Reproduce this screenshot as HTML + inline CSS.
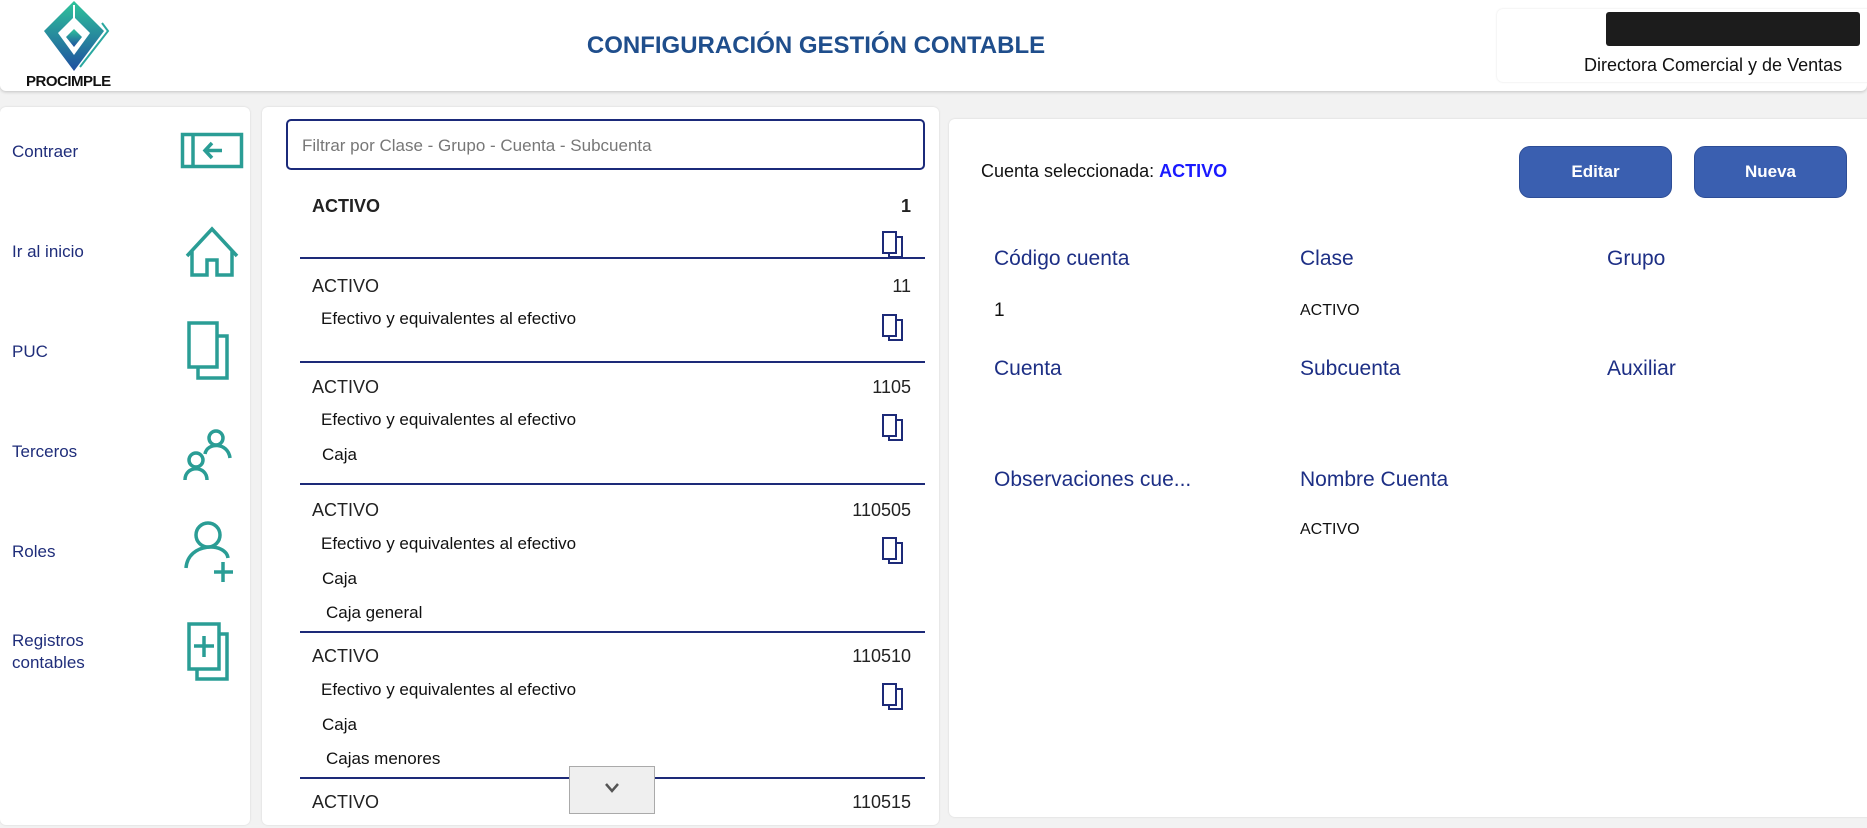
<!DOCTYPE html>
<html><head><meta charset="utf-8"><style>
*{margin:0;padding:0;box-sizing:border-box}
body{width:1867px;height:828px;background:#f2f2f2;font-family:"Liberation Sans",sans-serif;position:relative;overflow:hidden}
.a{position:absolute;white-space:nowrap}
.hdr{left:0;top:0;width:1867px;height:91px;background:#fff;box-shadow:0 1px 3px rgba(0,0,0,.2);border-radius:0 0 6px 6px}
.panel{background:#fff;border-radius:6px;box-shadow:0 0 2px rgba(0,0,0,.12)}
.nav{color:#1f2d7a;font-size:17px;left:12px}
.row{font-size:18px;color:#222}
.sub{font-size:17px;color:#111;left:321px}
.num{right:956px;font-size:18px;color:#222;text-align:right}
.sep{left:300px;width:625px;height:2px;background:#1d2a78}
.lbl{color:#1d2f85;font-size:21px}
.val{font-size:16px;color:#111}
.btn{background:#3a5fb0;color:#fff;font-weight:bold;font-size:17px;border-radius:11px;border:1px solid #2d4d96;display:flex;align-items:center;justify-content:center}
</style></head><body>
<div class="a hdr"></div>
<svg class="a" style="left:42px;top:1px" width="72" height="72" viewBox="0 0 72 72">
<defs><linearGradient id="g" x1="0" y1="0" x2="0" y2="1"><stop offset="0" stop-color="#2fc49a"/><stop offset="1" stop-color="#1f4fa0"/></linearGradient></defs>
<polygon points="32,0 62,30 32,70 2,30" fill="url(#g)"/>
<polygon points="32,16 48,32 32,54 16,32" fill="#fff"/>
<polygon points="32,28 40,36 32,46 24,36" fill="url(#g)"/>
<path d="M32 4 V22" stroke="#fff" stroke-width="2"/>
<path d="M60,22 L66,30 L38,66" fill="none" stroke="#2aa8a0" stroke-width="2"/>
</svg>
<div class="a" style="left:26px;top:73px;font-size:15px;font-weight:bold;color:#111;letter-spacing:-0.5px">PROCIMPLE</div>
<div class="a" style="left:0;width:1632px;top:32px;text-align:center;font-size:24px;font-weight:bold;color:#1f4e8c">CONFIGURACIÓN GESTIÓN CONTABLE</div>
<div class="a panel" style="left:1497px;top:9px;width:380px;height:73px"></div>
<div class="a" style="left:1606px;top:12px;width:254px;height:34px;background:#1c1c1c;border-radius:3px"></div>
<div class="a" style="left:1584px;top:55px;font-size:18px;color:#111">Directora Comercial y de Ventas</div>

<div class="a panel" style="left:0;top:107px;width:250px;height:718px"></div>
<div class="a nav" style="top:142px">Contraer</div>
<div class="a nav" style="top:242px">Ir al inicio</div>
<div class="a nav" style="top:342px">PUC</div>
<div class="a nav" style="top:442px">Terceros</div>
<div class="a nav" style="top:542px">Roles</div>
<div class="a nav" style="top:630px;line-height:22px">Registros<br>contables</div>
<svg class="a" style="left:180px;top:130px" width="66" height="560" viewBox="0 0 66 560" fill="none" stroke="#2a9d95" stroke-width="3.5">
<rect x="2.5" y="4.5" width="59" height="32"/><line x1="13" y1="4" x2="13" y2="37"/><path d="M25 20.5 H42 M32 13 L25 20.5 L32 28"/>
<path d="M7 126 L32 99 L57 126 M12 121 V145 H27 V130 H37 V145 H52 V121"/>
<rect x="9" y="193" width="28" height="44"/><path d="M37 206 H47 V248 H18 V237"/>
<circle cx="16" cy="330" r="7"/><path d="M5 350 C5 335 27 335 27 350"/><circle cx="36" cy="308" r="7"/><path d="M25 324 C27 312 48 312 50 328"/>
<circle cx="28" cy="405" r="12"/><path d="M6 438 C8 412 46 412 48 428 M43 432 V452 M34 442 H53"/>
<rect x="9" y="494" width="30" height="45"/><path d="M39 504 H47 V549 H17 V539 M24 506 V527 M14 516 H34"/>
</svg>

<div class="a panel" style="left:262px;top:107px;width:677px;height:718px"></div>
<div class="a" style="left:286px;top:119px;width:639px;height:51px;border:2px solid #1b2a7a;border-radius:5px"></div>
<div class="a" style="left:302px;top:136px;font-size:17px;color:#777">Filtrar por Clase - Grupo - Cuenta - Subcuenta</div>

<div class="a row" style="left:312px;top:196px;font-weight:bold">ACTIVO</div><div class="a num" style="top:196px;font-weight:bold">1</div>
<div class="a sep" style="top:257px"></div>
<div class="a row" style="left:312px;top:276px">ACTIVO</div><div class="a num" style="top:276px">11</div>
<div class="a sub" style="top:309px">Efectivo y equivalentes al efectivo</div>
<div class="a sep" style="top:361px"></div>
<div class="a row" style="left:312px;top:377px">ACTIVO</div><div class="a num" style="top:377px">1105</div>
<div class="a sub" style="top:410px">Efectivo y equivalentes al efectivo</div>
<div class="a sub" style="top:445px;left:322px">Caja</div>
<div class="a sep" style="top:483px"></div>
<div class="a row" style="left:312px;top:500px">ACTIVO</div><div class="a num" style="top:500px">110505</div>
<div class="a sub" style="top:534px">Efectivo y equivalentes al efectivo</div>
<div class="a sub" style="top:569px;left:322px">Caja</div>
<div class="a sub" style="top:603px;left:326px">Caja general</div>
<div class="a sep" style="top:631px"></div>
<div class="a row" style="left:312px;top:646px">ACTIVO</div><div class="a num" style="top:646px">110510</div>
<div class="a sub" style="top:680px">Efectivo y equivalentes al efectivo</div>
<div class="a sub" style="top:715px;left:322px">Caja</div>
<div class="a sub" style="top:749px;left:326px">Cajas menores</div>
<div class="a sep" style="top:777px"></div>
<div class="a row" style="left:312px;top:792px">ACTIVO</div><div class="a num" style="top:792px">110515</div>
<svg class="a" style="left:880px;top:230px" width="30" height="500" viewBox="0 0 30 500" fill="none" stroke="#1d2a78" stroke-width="2">
<g><rect x="3" y="2" width="13" height="21"/><path d="M16 7 H22 V27 H9 V23"/></g>
<g transform="translate(0,83)"><rect x="3" y="2" width="13" height="21"/><path d="M16 7 H22 V27 H9 V23"/></g>
<g transform="translate(0,183)"><rect x="3" y="2" width="13" height="21"/><path d="M16 7 H22 V27 H9 V23"/></g>
<g transform="translate(0,306)"><rect x="3" y="2" width="13" height="21"/><path d="M16 7 H22 V27 H9 V23"/></g>
<g transform="translate(0,452)"><rect x="3" y="2" width="13" height="21"/><path d="M16 7 H22 V27 H9 V23"/></g>
</svg>
<div class="a" style="left:569px;top:766px;width:86px;height:48px;background:#efefef;border:1px solid #aaa"></div>
<svg class="a" style="left:604px;top:782px" width="16" height="12"><path d="M2 2 L8 9 L14 2" fill="none" stroke="#555" stroke-width="2.5"/></svg>

<div class="a panel" style="left:949px;top:119px;width:930px;height:698px"></div>
<div class="a" style="left:981px;top:161px;font-size:18px;color:#111">Cuenta seleccionada: <b style="color:#1a1aff">ACTIVO</b></div>
<div class="a btn" style="left:1519px;top:146px;width:153px;height:52px">Editar</div>
<div class="a btn" style="left:1694px;top:146px;width:153px;height:52px">Nueva</div>
<div class="a lbl" style="left:994px;top:247px">Código cuenta</div>
<div class="a lbl" style="left:1300px;top:247px">Clase</div>
<div class="a lbl" style="left:1607px;top:247px">Grupo</div>
<div class="a val" style="left:994px;top:300px;font-size:19px">1</div>
<div class="a val" style="left:1300px;top:302px">ACTIVO</div>
<div class="a lbl" style="left:994px;top:357px">Cuenta</div>
<div class="a lbl" style="left:1300px;top:357px">Subcuenta</div>
<div class="a lbl" style="left:1607px;top:357px">Auxiliar</div>
<div class="a lbl" style="left:994px;top:468px">Observaciones cue...</div>
<div class="a lbl" style="left:1300px;top:468px">Nombre Cuenta</div>
<div class="a val" style="left:1300px;top:521px">ACTIVO</div>
</body></html>
